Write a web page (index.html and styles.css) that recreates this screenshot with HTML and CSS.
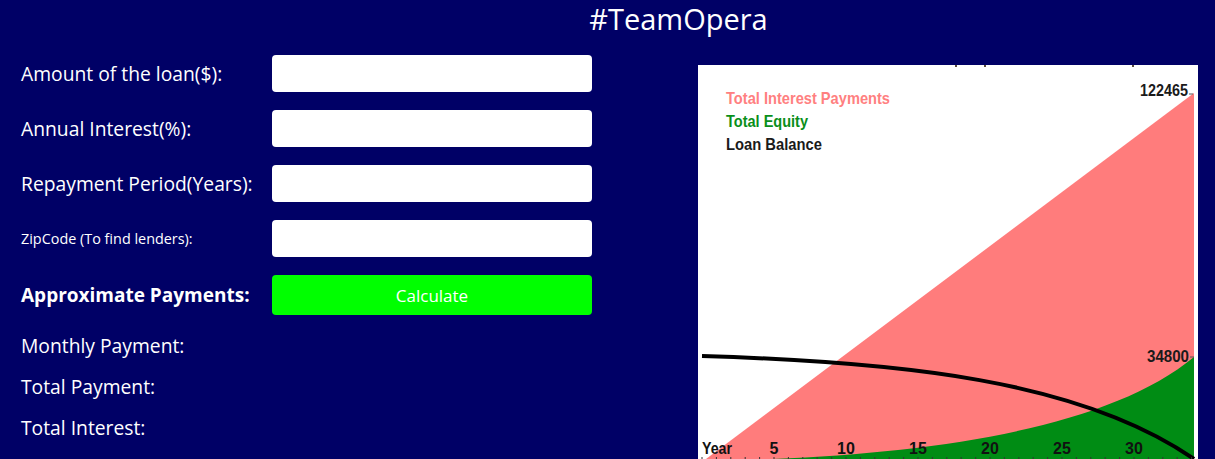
FILE: index.html
```html
<!DOCTYPE html>
<html lang="en">
<head>
<meta charset="utf-8">
<title>#TeamOpera</title>
<link rel="stylesheet" href="styles.css">
</head>
<body>
<header class="title">#TeamOpera</header>
<main class="layout">
  <section class="calc">
    <div class="form">
      <label class="label">Amount of the loan($):</label>
      <input class="field" type="text">
      <label class="label">Annual Interest(%):</label>
      <input class="field" type="text">
      <label class="label">Repayment Period(Years):</label>
      <input class="field" type="text">
      <label class="label label-small">ZipCode (To find lenders):</label>
      <input class="field" type="text">
      <div class="label label-bold">Approximate Payments:</div>
      <button class="calc-btn" type="button">Calculate</button>
    </div>
    <div class="results">
      <div class="result">Monthly Payment:</div>
      <div class="result">Total Payment:</div>
      <div class="result">Total Interest:</div>
    </div>
  </section>
  <aside class="chart">
    <svg class="chart-svg" width="500" height="400" viewBox="0 0 500 400">
      <rect x="0" y="0" width="500" height="400" fill="#ffffff"/>
      <rect x="257" y="0" width="2" height="2" fill="#5a4a3a"/>
      <rect x="286" y="0" width="2" height="2" fill="#5a4a3a"/>
      <rect x="434" y="0" width="2" height="2" fill="#5a4a3a"/>
      <polygon points="4,397 496,28 496,400 4,400" fill="#ff7c7c"/>
      <path d="M4,396 C202,393 402,370 496,292 L496,400 L4,400 Z" fill="#008c14"/>
      <path d="M4,291 C202,297 382,315 496,394" fill="none" stroke="#000" stroke-width="4"/>
      <g class="legend">
        <text x="28" y="39" fill="#ff8080" textLength="164" lengthAdjust="spacingAndGlyphs">Total Interest Payments</text>
        <text x="28" y="62" fill="#0a8f1a" textLength="82" lengthAdjust="spacingAndGlyphs">Total Equity</text>
        <text x="28" y="85" fill="#1a1a1a" textLength="96" lengthAdjust="spacingAndGlyphs">Loan Balance</text>
      </g>
      <g class="ylabels">
        <text x="442" y="31" textLength="48" lengthAdjust="spacingAndGlyphs">122465</text>
        <line x1="491" y1="29" x2="495" y2="29" stroke="#555" stroke-width="1"/>
        <text x="449" y="297" textLength="42" lengthAdjust="spacingAndGlyphs">34800</text>
        <line x1="492" y1="292" x2="496" y2="292" stroke="#555" stroke-width="1"/>
      </g>
      <g class="xlabels">
        <text x="4" y="389" textLength="30" lengthAdjust="spacingAndGlyphs">Year</text>
        <text x="76" y="389" text-anchor="middle">5</text>
        <text x="148" y="389" text-anchor="middle">10</text>
        <text x="220" y="389" text-anchor="middle">15</text>
        <text x="292" y="389" text-anchor="middle">20</text>
        <text x="364" y="389" text-anchor="middle">25</text>
        <text x="436" y="389" text-anchor="middle">30</text>
      </g>
      <path class="ticks" d="M4,392v3 M18.4,392v3 M32.8,392v3 M47.2,392v3 M61.6,392v3 M76,392v3 M90.4,392v3 M104.8,392v3 M119.2,392v3 M133.6,392v3 M148,392v3 M162.4,392v3 M176.8,392v3 M191.2,392v3 M205.6,392v3 M220,392v3 M234.4,392v3 M248.8,392v3 M263.2,392v3 M277.6,392v3 M292,392v3 M306.4,392v3 M320.8,392v3 M335.2,392v3 M349.6,392v3 M364,392v3 M378.4,392v3 M392.8,392v3 M407.2,392v3 M421.6,392v3 M436,392v3 M450.4,392v3 M464.8,392v3 M479.2,392v3 M493.6,392v3" stroke="#333" stroke-width="1"/>
    </svg>
  </aside>
</main>
</body>
</html>
```

FILE: styles.css
```css
* {
  box-sizing: border-box;
}

html, body {
  margin: 0;
  padding: 0;
}

body {
  background: #000066;
  color: #ffffff;
  font-family: "Open Sans", "DejaVu Sans", sans-serif;
  height: 459px;
  overflow: hidden;
}

.title {
  height: 55px;
  padding: 0 0 0 142px;
  text-align: center;
  font-size: 29px;
  line-height: 38px;
  font-weight: 400;
}

.layout {
  display: flex;
  align-items: flex-start;
  gap: 106px;
}

.calc {
  width: 592px;
  padding-left: 21px;
}

.form {
  display: grid;
  grid-template-columns: 251px 320px;
  grid-template-rows: 37px 37px 37px 37px 40px;
  row-gap: 18px;
  align-items: center;
}

.label {
  font-size: 19.3px;
  line-height: 24px;
  white-space: nowrap;
}

.label-small {
  font-size: 14.4px;
}

.label-bold {
  font-size: 19px;
  font-weight: 700;
}

.field {
  width: 320px;
  height: 37px;
  border: none;
  border-radius: 4px;
  background: #ffffff;
  padding: 0 10px;
  font: inherit;
}

.calc-btn {
  width: 320px;
  height: 40px;
  border: none;
  border-radius: 4px;
  background: #00ff00;
  color: #ffffff;
  font-family: inherit;
  font-size: 17px;
  padding: 0;
}

.results {
  padding-top: 10px;
}

.result {
  font-size: 19.3px;
  line-height: 41px;
  white-space: nowrap;
}

.chart {
  margin-top: 10px;
  width: 500px;
  height: 400px;
}

.chart-svg {
  display: block;
}

.chart-svg text {
  font-family: "Liberation Sans", Arial, sans-serif;
  font-weight: 700;
}

.legend text {
  font-size: 17px;
}

.ylabels text {
  font-size: 17px;
  fill: #1a1a1a;
}

.xlabels text {
  font-size: 16px;
  fill: #111111;
}
```
